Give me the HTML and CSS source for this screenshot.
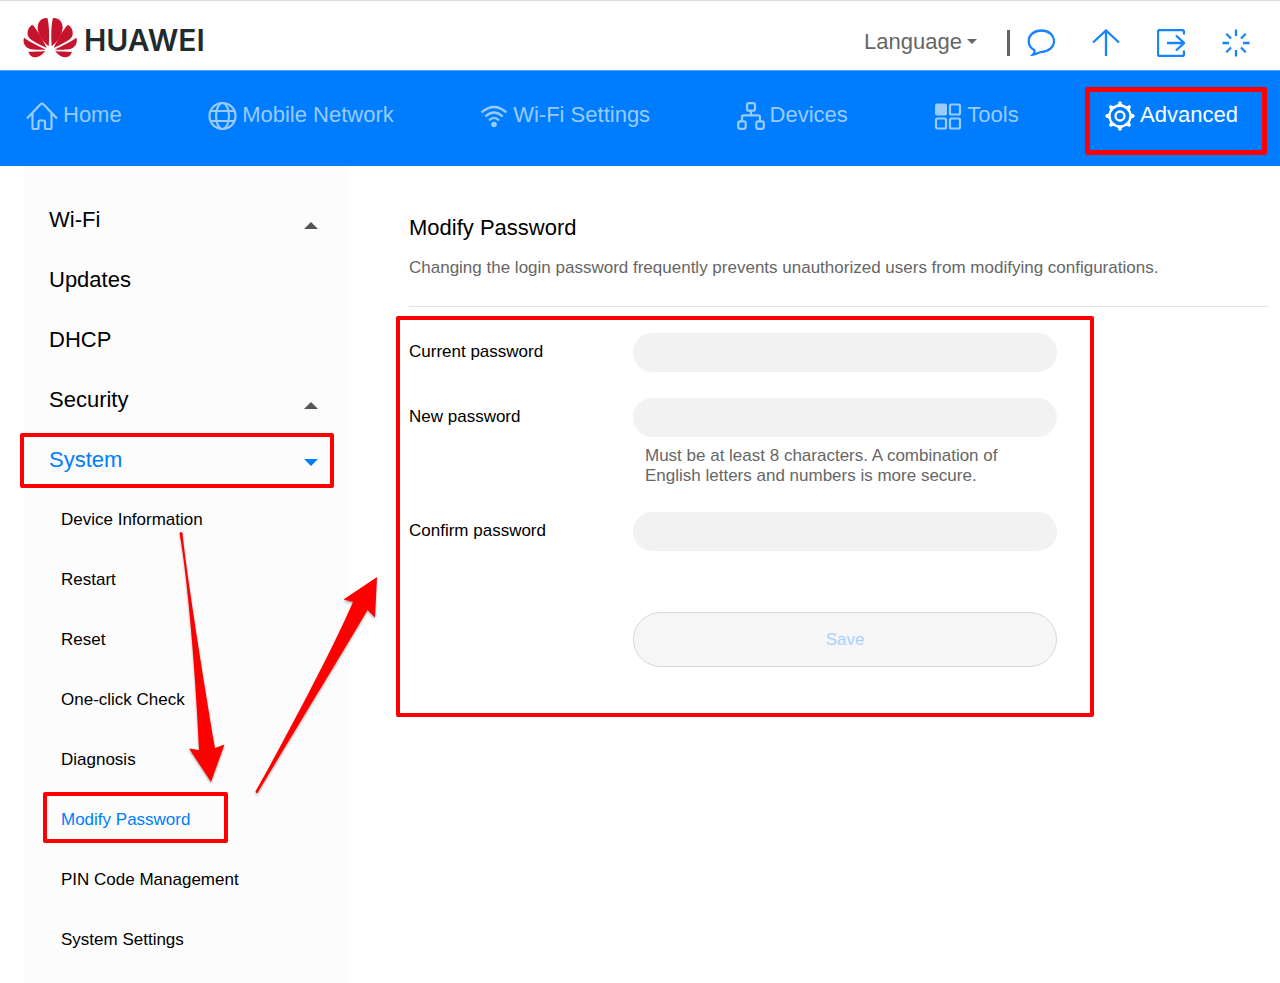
FILE: index.html
```html
<!DOCTYPE html>
<html lang="en">
<head>
  <title>Modify Password</title>
  <meta charset="UTF-8">
  <meta name="viewport" content="width=device-width, initial-scale=1">
  <link rel="stylesheet" href="styles.css">
</head>
<body>
  <header class="header">
    <a class="logo" href="#">
      <svg width="54" height="42" viewBox="70 50 162 126" fill="#c7142d" aria-hidden="true">
        <g id="petals">
          <path d="M147 138C149 112 149 72 143 53C127 51 114 63 114 82C115 103 130 124 147 138Z"/>
          <path d="M141 143C131 120 113 88 98 73C86 80 81 95 85 107C91 121 122 134 141 143Z"/>
          <path d="M138 148C118 137 90 125 73 112C69 123 73 137 84 143C95 149 122 149 138 148Z"/>
          <path d="M136 152C120 154 102 154 86 154C90 166 98 172 109 171C121 169 130 161 136 152Z"/>
        </g>
        <use href="#petals" transform="translate(303 0) scale(-1 1)"/>
      </svg>
      <span>HUAWEI</span>
    </a>
    <div class="header-tools">
      <button class="language" type="button">Language
        <svg width="10" height="5" viewBox="0 0 10 5" fill="currentColor" aria-hidden="true"><path d="M0 0H10L5 5Z"/></svg>
      </button>
      <span class="divider"></span>
      <button class="tool" type="button" title="Messages">
        <svg width="28" height="28" viewBox="0 0 28 28"><path d="M14.500 1.500C21.500 1.500 27 6 27 12C27 18 21.500 22.800 14.500 22.800C12 23.200 9.500 25.200 6 25.600C7.300 24.300 8 22.800 7.200 21C4 19.300 1.700 16 1.700 12C1.700 6 7.200 1.500 14.500 1.500Z"/></svg>
      </button>
      <button class="tool" type="button" title="Update">
        <svg width="28" height="28" viewBox="0 0 28 28"><path d="M14 27V1.500M1 13.500L14 1.500L27 13.500"/></svg>
      </button>
      <button class="tool" type="button" title="Log out">
        <svg width="28" height="28" viewBox="0 0 28 28"><path d="M27 5.500V3Q27 1 25 1H3Q1 1 1 3V25Q1 27 3 27H25Q27 27 27 25V21.500M10 14H27M19 6.500L27 14L19 21.500"/></svg>
      </button>
      <button class="tool" type="button" title="Status">
        <svg width="28" height="28" viewBox="0 0 28 28"><path d="M14 0.500V7M14 21V27.500M0.500 14H7M21 14H27.500M4.300 4.800L9 9.500M19 18.500L23.700 23.200M23.700 4.800L19 9.500M9 18.500L4.300 23.200"/></svg>
      </button>
    </div>
  </header>

  <nav class="navbar">
    <a href="#">
      <svg width="32" height="28" viewBox="0 0 32 28"><path d="M1 16.500L14.500 2.300Q16 1 17.500 2.300L31 16.500M6.500 11.500V25.500Q6.500 27 8 27H11Q12.500 27 12.500 25.500V20Q12.500 18.500 14 18.500H17.500Q19 18.500 19 20V25.500Q19 27 20.500 27H24Q25.500 27 25.500 25.500V11.500"/></svg>
      Home
    </a>
    <a href="#">
      <svg width="29" height="28" viewBox="0 0 29 28"><circle cx="14.500" cy="14" r="13"/><ellipse cx="14.500" cy="14" rx="6.500" ry="13"/><path d="M3 9H26M3 19H26"/></svg>
      Mobile Network
    </a>
    <a href="#">
      <svg width="28" height="28" viewBox="0 0 28 28"><path d="M1.500 10.500Q14 -0.500 26.500 10.500M5.300 14.500Q14 6.500 22.700 14.500M9 18.300Q14 13.500 19 18.300" stroke-width="2.300"/><circle class="solid" cx="14" cy="22.500" r="2.800"/></svg>
      Wi-Fi Settings
    </a>
    <a href="#">
      <svg width="28" height="28" viewBox="0 0 28 28"><rect x="10" y="1.200" width="8" height="7.500" rx="2"/><rect x="1.200" y="19.300" width="7.500" height="7.500" rx="2"/><rect x="19.300" y="19.300" width="7.500" height="7.500" rx="2"/><path d="M14 9V13.300M5 19V15Q5 13.300 6.700 13.300H21.300Q23 13.300 23 15V19"/></svg>
      Devices
    </a>
    <a href="#">
      <svg width="28" height="28" viewBox="0 0 28 28"><rect class="solid" x="1" y="1.500" width="12" height="12" rx="2"/><rect x="16" y="2.500" width="10" height="10" rx="1.500"/><rect x="2" y="16.500" width="10" height="10" rx="1.500"/><rect x="16" y="16.500" width="10" height="10" rx="1.500"/></svg>
      Tools
    </a>
    <a class="active" href="#">
      <svg width="30" height="30" viewBox="0 0 30 30">
        <circle cx="15" cy="15" r="10.500" stroke-width="2.300"/>
        <circle cx="15" cy="15" r="4.500" stroke-width="2.300"/>
        <g id="teeth" class="solid">
          <path d="M10 5Q13.300 4 13.300 1.500Q15 -1 16.700 1.500Q16.700 4 20 5ZM10 25Q13.300 26 13.300 28.500Q15 31 16.700 28.500Q16.700 26 20 25ZM5 10Q4 13.300 1.500 13.300Q-1 15 1.500 16.700Q4 16.700 5 20ZM25 10Q26 13.300 28.500 13.300Q31 15 28.500 16.700Q26 16.700 25 20Z"/>
        </g>
        <use href="#teeth" transform="rotate(45 15 15)"/>
      </svg>
      Advanced
      <span class="mark mark-nav"></span>
    </a>
  </nav>

  <div class="content">
    <aside class="sidebar">
      <ul class="menu">
        <li><a href="#">Wi-Fi <span class="caret"></span></a></li>
        <li><a href="#">Updates</a></li>
        <li><a href="#">DHCP</a></li>
        <li><a href="#">Security <span class="caret"></span></a></li>
        <li>
          <a class="active" href="#">System <span class="caret caret-down"></span><span class="mark mark-menu"></span></a>
          <ul class="submenu">
            <li><a href="#">Device Information</a></li>
            <li><a href="#">Restart</a></li>
            <li><a href="#">Reset</a></li>
            <li><a href="#">One-click Check</a></li>
            <li><a href="#">Diagnosis</a></li>
            <li><a class="active" href="#">Modify Password <span class="mark mark-submenu"></span></a></li>
            <li><a href="#">PIN Code Management</a></li>
            <li><a href="#">System Settings</a></li>
          </ul>
        </li>
      </ul>
      <!-- arrows: system menu -> modify password -> form -->
      <svg class="arrows" width="220" height="280" viewBox="170 525 220 280" aria-hidden="true">
        <path d="M179.500 533Q181 531 182.500 533C185 560 197 640 215 748L224.500 744.500L211 782L189 748.500L199 750C196 680 188 580 179.500 533Z"/>
        <path d="M255.500 791.500C280 748 330 655 353 602L343.500 599.500L377 577L375 617.500L367.500 610C340 657 285 747 257.500 793Q256 793.500 255.500 791.500Z"/>
      </svg>
    </aside>

    <main class="main">
      <h1>Modify Password</h1>
      <p class="description">Changing the login password frequently prevents unauthorized users from modifying configurations.</p>
      <form class="password-form">
        <div class="form-row">
          <label for="current-password">Current password</label>
          <input type="password" id="current-password">
        </div>
        <div class="form-row">
          <label for="new-password">New password</label>
          <div class="field">
            <input type="password" id="new-password" aria-describedby="password-hint">
            <p class="hint" id="password-hint">Must be at least 8 characters. A combination of English letters and numbers is more secure.</p>
          </div>
        </div>
        <div class="form-row">
          <label for="confirm-password">Confirm password</label>
          <input type="password" id="confirm-password">
        </div>
        <div class="form-row form-actions">
          <button class="btn-save" type="submit" disabled>Save</button>
        </div>
        <span class="mark mark-form"></span>
      </form>
    </main>
  </div>
</body>
</html>
```
FILE: styles.css
```css
* {
  box-sizing: border-box;
}
body {
  display: flex;
  flex-direction: column;
  min-height: 100vh;
  margin: 0;
  font-family: "Liberation Sans", Arial, Helvetica, sans-serif;
  font-size: 17px;
  line-height: 20px;
  color: #000;
  background-color: #fff;
}
a {
  color: inherit;
  text-decoration: none;
}
button {
  font-family: inherit;
  cursor: pointer;
}

/* Top bar */
.header {
  display: flex;
  justify-content: space-between;
  align-items: center;
  height: 70px;
  padding: 4px 30px 0 23px;
  border-top: 1px solid #dcdce0;
}
.logo {
  display: flex;
  align-items: center;
  gap: 7px;
  color: #232a2d;
  font-family: Inter, sans-serif;
  font-size: 30px;
  font-weight: 600;
  line-height: 42px;
}
.logo span {
  padding-top: 5px;
}
.header-tools {
  display: flex;
  align-items: center;
  gap: 37px;
  padding-top: 11px;
}
.header-tools button {
  display: flex;
  align-items: center;
  padding: 0;
  border: none;
  background: none;
}
.header-tools .language {
  gap: 5px;
  margin-right: -7px;
  padding-bottom: 3px;
  color: #666;
  font-size: 22px;
  line-height: 28px;
}
.divider {
  width: 3px;
  height: 26px;
  margin-right: -20px;
  background-color: #666;
}
.tool svg {
  fill: none;
  stroke: #1683ff;
  stroke-width: 2.3;
}

/* Main navigation */
.navbar {
  display: flex;
  justify-content: space-between;
  align-items: center;
  height: 96px;
  padding: 0 42px 8px 26px;
  border-top: 1px solid #4da3ff;
  background-color: #007dff;
  font-size: 22px;
  line-height: 28px;
}
.navbar a {
  position: relative;
  display: flex;
  align-items: center;
  gap: 5px;
  color: #99cbff;
  white-space: nowrap;
}
.navbar a.active {
  color: #fff;
}
.navbar svg {
  margin-top: 2px;
  overflow: visible;
  fill: none;
  stroke: currentColor;
  stroke-width: 2.2;
}
.navbar .solid {
  fill: currentColor;
  stroke: none;
}

.content {
  display: flex;
  flex-grow: 1;
}

/* Side menu */
.sidebar {
  position: relative;
  width: 324px;
  flex-shrink: 0;
  margin-left: 24px;
  padding-top: 24px;
  background-color: #fcfcfc;
}
.menu,
.submenu {
  margin: 0;
  padding: 0;
  list-style: none;
}
.menu a {
  position: relative;
  display: flex;
  justify-content: space-between;
  align-items: center;
  height: 60px;
  padding: 0 30px 0 25px;
  font-size: 22px;
}
.menu a.active {
  color: #007dff;
}
.menu .submenu a {
  padding-left: 37px;
  font-size: 17px;
}
.caret {
  margin-top: 10px;
  border: 7px solid transparent;
  border-top: none;
  border-bottom: 7px solid #555;
}
.caret-down {
  margin-top: 4px;
  border-top: 7px solid #007dff;
  border-bottom: none;
}

/* Password form */
.main {
  flex-grow: 1;
  padding: 48px 12px 48px 61px;
}
h1 {
  margin: 0 0 16px;
  font-size: 22px;
  font-weight: normal;
  line-height: 28px;
}
.description {
  margin: 0;
  padding-bottom: 28px;
  border-bottom: 1px solid #e5e5e5;
  color: #666;
}
.password-form {
  position: relative;
  display: flex;
  flex-direction: column;
  gap: 26px;
  max-width: 648px;
  padding-top: 26px;
}
.form-row {
  display: flex;
  align-items: flex-start;
}
.form-row label {
  width: 224px;
  flex-shrink: 0;
  line-height: 38px;
}
.field {
  flex-grow: 1;
}
.form-row input {
  display: block;
  width: 100%;
  height: 39px;
  padding: 0 16px;
  border: none;
  border-radius: 20px;
  background-color: #f2f2f2;
  font-size: 17px;
}
.hint {
  margin: 9px 12px 0;
  color: #666;
}
.form-actions {
  padding: 35px 0 0 224px;
}
.btn-save {
  width: 100%;
  height: 55px;
  border: 1px solid #d8d8d8;
  border-radius: 28px;
  background-color: #f6f6f6;
  color: #a8d1ff;
  font-size: 17px;
}

/* Red highlights laid over the page */
.mark {
  position: absolute;
  border: 4px solid #f00;
  border-radius: 2px;
  pointer-events: none;
}
.mark-nav {
  inset: -12px -29px -24px -20px;
  border-width: 5px;
}
.mark-menu {
  inset: 3px 14px 2px -4px;
}
.mark-submenu {
  inset: 2px 120px 7px 19px;
}
.mark-form {
  inset: 9px -37px -50px -13px;
}
.arrows {
  position: absolute;
  top: 359px;
  left: 146px;
  fill: #f00;
  filter: drop-shadow(0 2px 1px rgba(0, 0, 0, 0.3));
  pointer-events: none;
}
```
